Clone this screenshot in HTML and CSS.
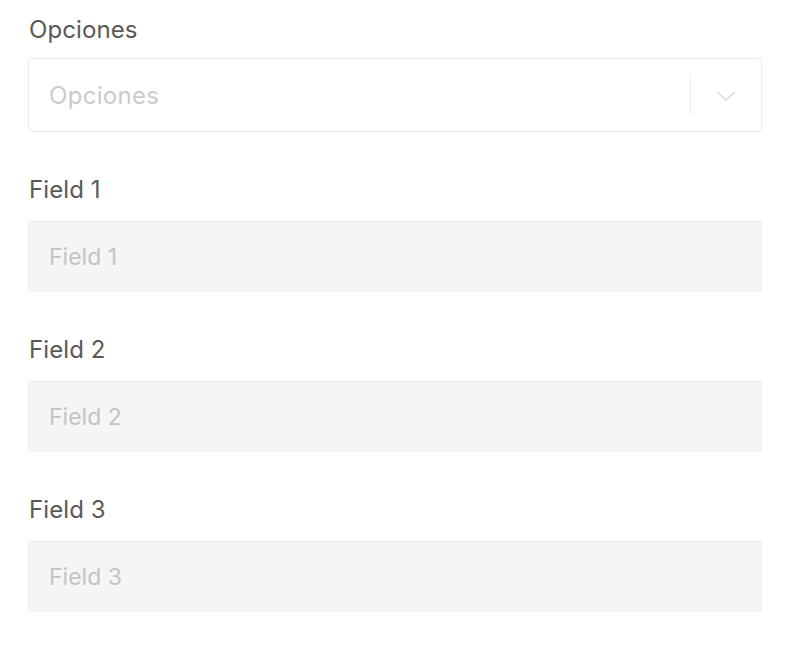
FILE: index.html
```html
<!DOCTYPE html>
<html>
<head>
    <meta name="viewport" content="width=device-width, initial-scale=1.0">
    <link rel="stylesheet" href="styles.css">
</head>
<body>
    <form class="form">
        <div class="field">
            <label for="opciones">Opciones</label>
            <div class="select">
                <span class="select-value">Opciones</span>
                <span class="select-divider"></span>
                <span class="select-arrow">
                    <svg width="22" height="12" viewBox="0 0 22 12"><path d="M2 2l9 8 9-8" fill="none" stroke="#d9d9d9" stroke-width="1.6"/></svg>
                </span>
            </div>
        </div>

        <div class="field">
            <label for="field1">Field 1</label>
            <input type="text" id="field1" placeholder="Field 1" disabled>
        </div>

        <div class="field">
            <label for="field2">Field 2</label>
            <input type="text" id="field2" placeholder="Field 2" disabled>
        </div>

        <div class="field">
            <label for="field3">Field 3</label>
            <input type="text" id="field3" placeholder="Field 3" disabled>
        </div>
    </form>
</body>
</html>
```

FILE: styles.css
```css
/* Page */
body {
    margin: 0;
    padding: 16px 38px 0 28px;
    font-family: Inter, "Noto Sans", sans-serif;
    background: white;
}

.form {
    display: flex;
    flex-direction: column;
    gap: 44px;
}

/* Label + control */
.field {
    display: flex;
    flex-direction: column;
    gap: 14px;
}

.field + .field {
    gap: 17px;
}

label {
    font-size: 24px;
    line-height: 28px;
    color: #595959;
    padding-left: 1px;
    letter-spacing: 0.1px;
}

/* Select box */
.select {
    display: flex;
    align-items: center;
    height: 74px;
    box-sizing: border-box;
    border: 1px solid #ececec;
    border-radius: 3px;
    padding-left: 20px;
}

.select-value {
    flex: 1;
    font-size: 24px;
    letter-spacing: 0.3px;
    color: #cbcbcb;
}

.select-divider {
    width: 1px;
    height: 40px;
    background: #ececec;
}

.select-arrow {
    width: 70px;
    display: flex;
    justify-content: center;
    padding-top: 2px;
}

/* Disabled inputs */
input {
    height: 71px;
    box-sizing: border-box;
    border: 1px solid #eeeeee;
    border-radius: 3px;
    background: #f5f5f5;
    padding: 0 20px;
    font-family: inherit;
    font-size: 23px;
    color: #c4c4c4;
    margin: 0;
}

input::placeholder {
    color: #c4c4c4;
}
```
